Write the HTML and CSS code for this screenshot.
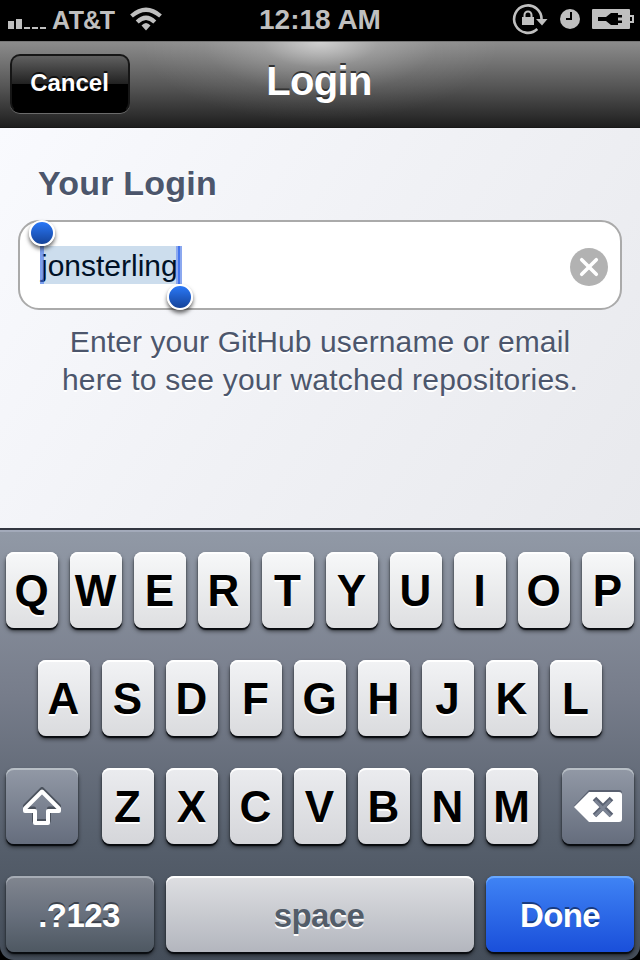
FILE: index.html
```
<!DOCTYPE html>
<html lang="en">
<head>
<meta charset="utf-8">
<title>Login</title>
<link rel="stylesheet" href="styles.css">
</head>
<body>
<div class="phone">
  <header class="status">
    <div class="status-left">
      <svg class="signal" width="40" height="12" viewBox="0 0 40 12" fill="#bfbfbf"><path d="M0 3h6v8H0zM8 1h6v10H8zM16 9h6v2h-6zM24 9h6v2h-6zM32 9h6v2h-6z"/></svg>
      <span class="carrier">AT&amp;T</span>
      <svg class="wifi" width="32" height="24" viewBox="0 0 32 24"><g fill="none" stroke="#bfbfbf" stroke-width="4.200"><path d="M1.500 9Q16-3.500 30.500 9"/><path d="M7.200 15Q16 6.500 24.800 15"/></g><path d="M11.500 18.500Q16 13.500 20.500 18.500L16 23.500z" fill="#bfbfbf"/></svg>
    </div>
    <div class="clock">12:18 AM</div>
    <div class="status-right">
      <svg width="36" height="32" viewBox="0 0 36 32"><path d="M29.500 17A13.700 13.700 0 1 0 25.300 26" fill="none" stroke="#bfbfbf" stroke-width="2.600"/><path d="M24 16h11.500L30 22.500z" fill="#bfbfbf"/><path d="M10 14h12v8H10z" fill="#bfbfbf"/><path d="M12.500 14v-2a3.500 3.500 0 0 1 7 0v2" fill="none" stroke="#bfbfbf" stroke-width="2"/></svg>
      <svg class="alarm" width="20" height="20" viewBox="0 0 20 20"><circle cx="10" cy="10" r="10" fill="#bfbfbf"/><path d="M11 3v7H6" fill="none" stroke="#000" stroke-width="2"/></svg>
      <svg class="battery" width="42" height="20" viewBox="0 0 42 20"><rect width="38" height="20" rx="1" fill="#bfbfbf"/><path d="M38 7h3v6h-3" fill="none" stroke="#bfbfbf" stroke-width="2"/><path d="M6 8h8l5-4h7v2h4v2.500h-4v3h4V14h-4v2h-7l-5-4H6z" fill="#000"/></svg>
    </div>
  </header>
  <nav class="navbar">
    <button class="cancel">Cancel</button>
    <h1 class="title">Login</h1>
  </nav>
  <main class="form">
    <h2 class="label">Your Login</h2>
    <div class="field">
      <span class="selection">jonsterling<i class="caret start"></i><i class="caret end"></i><i class="knob knob-start"></i><i class="knob knob-end"></i></span>
      <svg class="clear" width="38" height="38" viewBox="0 0 38 38"><circle cx="19" cy="19" r="19" fill="#b2b2b2"/><path d="M11.700 11.700l14.600 14.600M26.300 11.700L11.700 26.300" stroke="#fff" stroke-width="3.600" stroke-linecap="round"/></svg>
    </div>
    <p class="hint"><span class="hint-one">Enter your GitHub username or email</span><br><span class="hint-two">here to see your watched repositories.</span></p>
  </main>
  <section class="keyboard-bed">
    <div class="keyboard">
      <div class="row"><b class="key">Q</b><b class="key">W</b><b class="key">E</b><b class="key">R</b><b class="key">T</b><b class="key">Y</b><b class="key">U</b><b class="key">I</b><b class="key">O</b><b class="key">P</b></div>
      <div class="row row-two"><b class="key">A</b><b class="key">S</b><b class="key">D</b><b class="key">F</b><b class="key">G</b><b class="key">H</b><b class="key">J</b><b class="key">K</b><b class="key">L</b></div>
      <div class="row row-three">
        <div class="key side"><svg width="42" height="40" viewBox="0 0 42 40"><g fill="none" stroke-width="4" stroke-linejoin="round"><path d="M21 4L4 21v2.500h9V36h15V23.500h10V21z" stroke="#4a515c" transform="translate(0 -2)"/><path d="M21 4.500L4 21.500V24h10v12h13V24h11v-2.500z" stroke="#fff"/></g></svg></div>
        <div class="letters"><b class="key">Z</b><b class="key">X</b><b class="key">C</b><b class="key">V</b><b class="key">B</b><b class="key">N</b><b class="key">M</b></div>
        <div class="key side"><svg width="50" height="36" viewBox="0 0 50 36"><path d="M16 1h30a3 3 0 0 1 3 3v27H16L1 17z" fill="#596070"/><path d="M16 3h30a3 3 0 0 1 3 3v24a3 3 0 0 1-3 3H16L1 18z" fill="#fff"/><path d="M21.500 9.500L38.500 26.500M38.500 9.500L21.500 26.500" stroke="#5a6273" stroke-width="5"/><path d="M22 11.500L37.500 27M37.500 11.500L22 27" stroke="#7c8494" stroke-width="3"/></svg></div>
      </div>
      <div class="row row-four"><b class="key mode">.?123</b><b class="key space">space</b><b class="key done">Done</b></div>
    </div>
  </section>
</div>
</body>
</html>
```
FILE: styles.css
```
* { box-sizing: border-box; }
body { margin: 0; background: #000; font-family: "Liberation Sans", Arial, sans-serif; }
.phone { width: 640px; height: 960px; overflow: hidden; display: flex; flex-direction: column; }

.status { height: 41px; background: #000; color: #bfbfbf; display: grid; grid-template-columns: 200px 240px 200px; align-items: start; font-weight: bold; }
.status-left { display: flex; align-items: flex-start; padding-left: 8px; }
.signal { margin-top: 18px; }
.carrier { font-size: 25px; line-height: 28px; margin: 6px 0 0 4px; width: 65px; font-kerning: none; letter-spacing: -1.2px; }
.wifi { margin: 7px 0 0 13px; }
.clock { font-size: 28px; line-height: 32px; text-align: center; padding: 4px 0 0; white-space: nowrap; }
.status-right { display: flex; padding: 3px 0 0 72px; }
.alarm { margin: 6px 0 0 12px; flex: none; }
.battery { margin: 6px 0 0 12px; flex: none; }

.navbar { height: 87px; display: grid; grid-template-columns: 120px 1fr 120px; padding: 12px 10px; border-top: 1px solid #777; border-bottom: 1px solid #181818; background: radial-gradient(ellipse 180px 80px at 50% 0, rgba(255,255,255,.6), rgba(255,255,255,.22) 32%, rgba(255,255,255,.06) 65%, rgba(255,255,255,0)), linear-gradient(#8c8c8c, #565656 52%, #1e1e1e); }
.cancel { height: 59px; border: 2px solid #161616; border-bottom-color: #000; border-radius: 10px; background: linear-gradient(#606060, #222 50%, #000 50%); box-shadow: 0 1px 0 #6b6b6b; color: #fff; font: bold 24px/28px "Liberation Sans", Arial, sans-serif; padding: 0 1px 1px 0; text-shadow: 0 -2px 0 #111; letter-spacing: 0; }
.title { margin: 4px 0 0; text-align: center; color: #fff; font-size: 40px; line-height: 46px; text-shadow: 0 -2px 0 #333; letter-spacing: -.7px; padding-right: 2px; }

.form { height: 400px; padding: 36px 18px 0; background: linear-gradient(125deg, #f9fafe, #f0f1f5 50%, #e8e9ed); }
.label { margin: 0 0 17px 20px; font-size: 34px; line-height: 39px; color: #4c566c; text-shadow: 0 2px 0 #fff; letter-spacing: .2px; }
.field { width: 604px; height: 90px; border: 2px solid #aaa; border-radius: 21px; background: #fff; display: flex; align-items: center; justify-content: space-between; padding: 0 12px 0 20px; }
.selection { position: relative; width: 142px; height: 38px; background: #ccdded; padding-left: 1px; font-size: 30px; line-height: 40px; color: #001126; }
.caret { position: absolute; top: 0; height: 38px; background: #4474ed; }
.start { left: 0; width: 4px; opacity: .6; }
.end { right: 0; width: 6px; border: solid #8ba8ef; border-width: 0 2px; }
.knob { position: absolute; width: 26px; height: 26px; border: 2px solid #fff; border-radius: 50%; background: linear-gradient(#2a78f7, #154399); box-shadow: 0 3px 4px rgba(0,0,0,.6); }
.knob-start { left: -11px; top: -26px; }
.knob-end { right: -11px; top: 38px; }
.clear { position: relative; top: 2px; }
.hint { margin: 13px 0 0; text-align: center; font-size: 30px; line-height: 38px; color: #4c566c; text-shadow: 0 2px 0 #fff; white-space: nowrap; }
.hint-one { letter-spacing: .1px; }
.hint-two { letter-spacing: .2px; }

.keyboard-bed { height: 432px; background: #000; }
.keyboard { height: 432px; padding: 22px 6px 0; border-top: 2px solid #333741; border-radius: 0 0 14px 14px; background: linear-gradient(#a3aaba 2px, #9199a6 2px, #777d8b 38%, #58616e 70%, #444d59); display: flex; flex-direction: column; gap: 32px; }
.row { display: flex; gap: 12px; height: 76px; }
.row-two { padding-left: 32px; }
.row-three { justify-content: space-between; }
.letters { display: flex; gap: 12px; }
.key { width: 52px; height: 76px; border-radius: 8px; flex: none; display: flex; align-items: center; justify-content: center; padding: 2px 1px 0 0; font-size: 44px; line-height: 50px; color: #000; background: linear-gradient(#f7f8f9, #dedfe1); box-shadow: inset 0 2px 0 #fff, 0 2px 1px #080b0f, 0 3px 4px rgba(0,0,0,.6); text-shadow: 0 2px 0 #fff; }
.row-two .key { background: linear-gradient(#f2f3f5, #dadbde); }
.letters .key { background: linear-gradient(#ebecef, #d5d6da); }
.row-three .side { width: 72px; padding: 2px 0 0; background: linear-gradient(#9299a6, #656d7d); box-shadow: inset 0 2px 0 #b8bfc6, 0 2px 1px #080b0f, 0 3px 4px rgba(0,0,0,.6); }
.row-four .key { font-size: 33px; letter-spacing: -.6px; padding: 3px 2px 0 0; }
.row-four .mode { width: 148px; color: #fff; background: linear-gradient(#818690, #68707d 50%, #4e5862); box-shadow: inset 0 2px 0 #a6acb5, 0 2px 1px #080b0f, 0 3px 4px rgba(0,0,0,.6); text-shadow: 0 -2px 0 #3c424c; }
.row-four .space { width: 308px; color: #535d69; background: linear-gradient(#dedfe2, #b3b6be); }
.row-four .done { width: 148px; padding-right: 0; color: #fff; background: linear-gradient(#4084f5, #1a4fda); box-shadow: inset 0 2px 0 #69a8ff, 0 2px 1px #080b0f, 0 3px 4px rgba(0,0,0,.6); text-shadow: 0 -2px 0 #183b80; }
```
